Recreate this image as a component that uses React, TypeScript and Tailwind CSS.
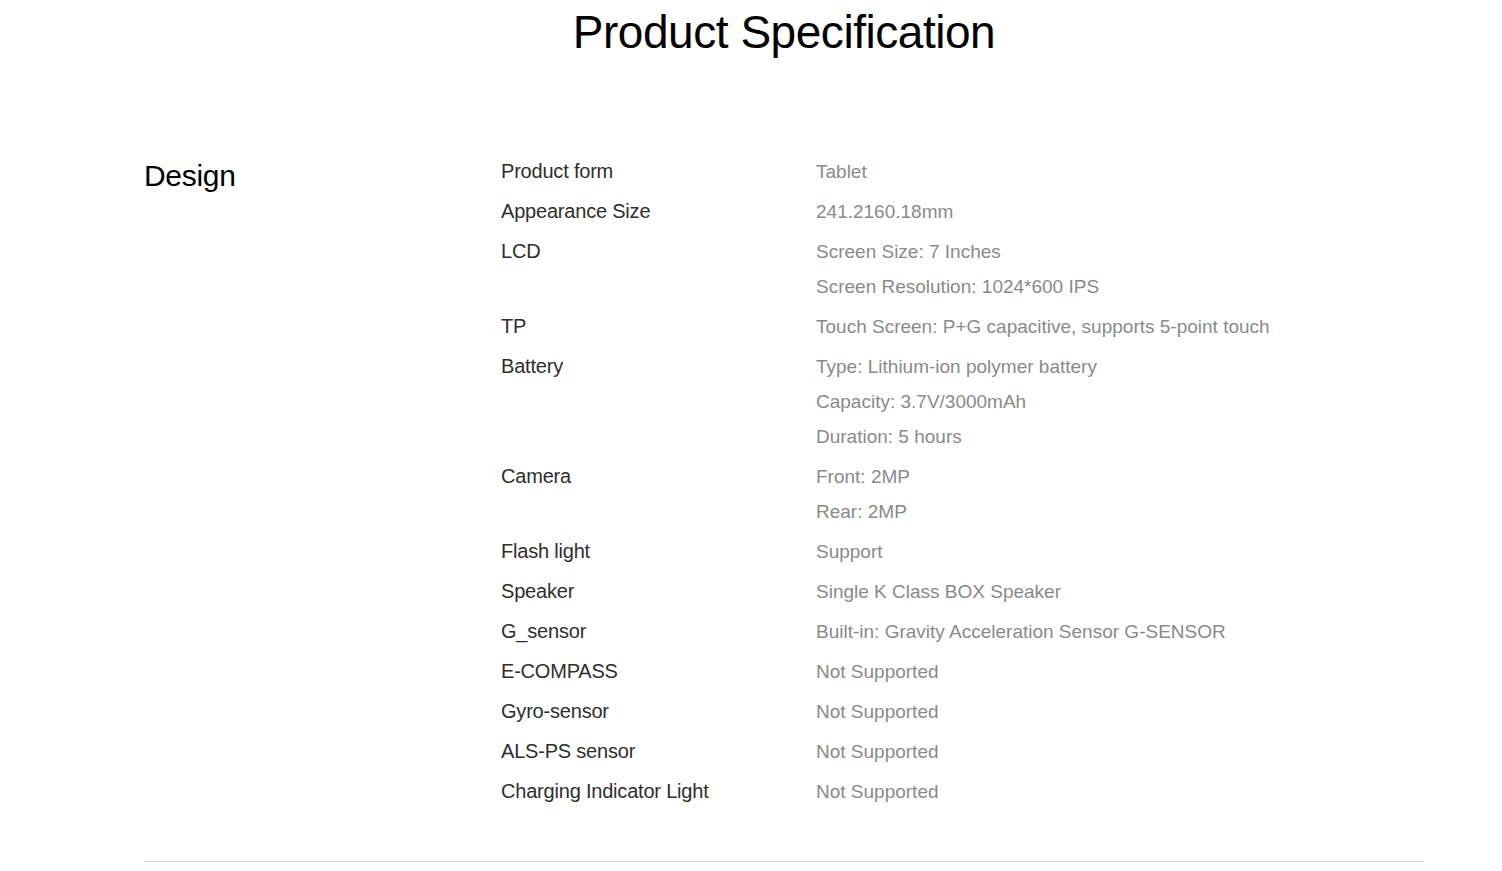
const specs: { label: string; values: string[] }[] = [
  { label: "Product form", values: ["Tablet"] },
  { label: "Appearance Size", values: ["241.2160.18mm"] },
  { label: "LCD", values: ["Screen Size: 7 Inches", "Screen Resolution: 1024*600 IPS"] },
  { label: "TP", values: ["Touch Screen: P+G capacitive, supports 5-point touch"] },
  {
    label: "Battery",
    values: ["Type: Lithium-ion polymer battery", "Capacity: 3.7V/3000mAh", "Duration: 5 hours"],
  },
  { label: "Camera", values: ["Front: 2MP", "Rear: 2MP"] },
  { label: "Flash light", values: ["Support"] },
  { label: "Speaker", values: ["Single K Class BOX Speaker"] },
  { label: "G_sensor", values: ["Built-in: Gravity Acceleration Sensor G-SENSOR"] },
  { label: "E-COMPASS", values: ["Not Supported"] },
  { label: "Gyro-sensor", values: ["Not Supported"] },
  { label: "ALS-PS sensor", values: ["Not Supported"] },
  { label: "Charging Indicator Light", values: ["Not Supported"] },
];

export default function App() {
  return (
    <div className="min-h-screen bg-white font-['Liberation_Sans',Arial,sans-serif]">
      <div className="ml-[144px] w-[1280px]">
        <h1 className="pt-[4px] text-center text-[46px] leading-[56px] tracking-[-0.01em] text-black">
          Product Specification
        </h1>

        <section className="mt-[94px] flex border-b border-[#d6d6da] pb-[52px]">
          <h2 className="w-[357px] shrink-0 pt-[2px] text-[30px] leading-[40px] tracking-[-0.01em] text-black">
            Design
          </h2>
          <ul className="flex flex-col gap-[5px]">
            {specs.map((row) => (
              <li key={row.label} className="flex leading-[35px]">
                <span className="w-[315px] shrink-0 text-[20px] tracking-[-0.01em] text-[#2e2e2e]">
                  {row.label}
                </span>
                <div className="flex flex-col text-[19px] text-[#8a8a8a]">
                  {row.values.map((v) => (
                    <span key={v}>{v}</span>
                  ))}
                </div>
              </li>
            ))}
          </ul>
        </section>
      </div>
    </div>
  );
}
